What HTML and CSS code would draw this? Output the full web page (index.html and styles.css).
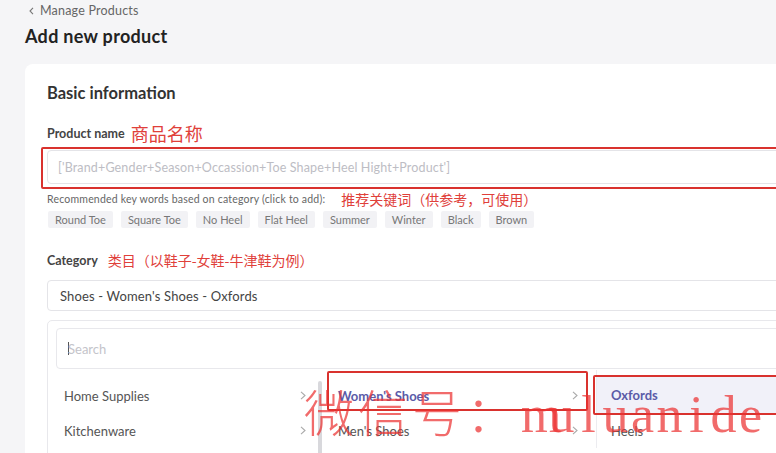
FILE: index.html
```html
<!DOCTYPE html>
<html>
<head>
<meta charset="utf-8">
<link rel="stylesheet" href="styles.css">
</head>
<body>
<div class="page">
  <div class="crumb"><svg class="crumb-icon" width="5" height="8" viewBox="0 0 5 8"><path d="M4 0.8 L1 4 L4 7.2" fill="none" stroke="#777" stroke-width="1.1"/></svg>Manage Products</div>
  <h1 class="title">Add new product</h1>
  <div class="card">
    <h2 class="section">Basic information</h2>
    <div class="label-row"><span class="label">Product name</span><span class="note big">商品名称</span></div>
    <div class="name-wrap">
      <div class="input name-input">['Brand+Gender+Season+Occassion+Toe Shape+Heel Hight+Product']</div>
    </div>
    <div class="hint-row"><span class="hint">Recommended key words based on category (click to add):</span><span class="note small">推荐关键词（供参考，可使用）</span></div>
    <div class="tags">
      <span class="tag">Round Toe</span><span class="tag">Square Toe</span><span class="tag">No Heel</span><span class="tag">Flat Heel</span><span class="tag">Summer</span><span class="tag">Winter</span><span class="tag">Black</span><span class="tag">Brown</span>
    </div>
    <div class="label-row cat-row"><span class="label">Category</span><span class="note small">类目（以鞋子-女鞋-牛津鞋为例）</span></div>
    <div class="input cat-input">Shoes - Women's Shoes - Oxfords</div>
    <div class="panel">
      <div class="search"><span class="caret"></span>Search</div>
      <div class="cols">
        <div class="col col1">
          <div class="item">Home Supplies<svg class="chev" width="6" height="9" viewBox="0 0 6 9"><path d="M1 0.8 L5 4.5 L1 8.2" fill="none" stroke="#aaa" stroke-width="1.1"/></svg></div>
          <div class="item">Kitchenware<svg class="chev" width="6" height="9" viewBox="0 0 6 9"><path d="M1 0.8 L5 4.5 L1 8.2" fill="none" stroke="#aaa" stroke-width="1.1"/></svg></div>
          <div class="scroll"></div>
        </div>
        <div class="col col2">
          <div class="item active">Women's Shoes<svg class="chev" width="6" height="9" viewBox="0 0 6 9"><path d="M1 0.8 L5 4.5 L1 8.2" fill="none" stroke="#aaa" stroke-width="1.1"/></svg></div>
          <div class="item">Men's Shoes<svg class="chev" width="6" height="9" viewBox="0 0 6 9"><path d="M1 0.8 L5 4.5 L1 8.2" fill="none" stroke="#aaa" stroke-width="1.1"/></svg></div>
        </div>
        <div class="col col3">
          <div class="item active selected">Oxfords</div>
          <div class="item">Heels</div>
        </div>
      </div>
    </div>
  </div>
</div>
<div class="mark mark-name"></div>
<div class="mark mark-women"></div>
<div class="mark mark-ox"></div>
<div class="watermark"><span class="wm-cjk">微信号：</span><span class="wm-latin"><span>m</span><span>u</span><span>l</span><span>u</span><span>a</span><span>n</span><span>i</span><span>d</span><span>e</span></span></div>
</body>
</html>
```
FILE: styles.css
```css
html, body {
  margin: 0;
  padding: 0;
  width: 776px;
  height: 453px;
  overflow: hidden;
  background: #f5f5f7;
  font-family: Lato, "Open Sans", "Noto Sans CJK SC", sans-serif;
  color: #333;
  position: relative;
}
.page {
  padding-left: 25px;
}
.crumb {
  display: flex;
  align-items: center;
  font-size: 12.5px;
  color: #666;
  padding: 3px 0 0 4px;
  height: 16px;
  line-height: 16px;
  letter-spacing: 0.2px;
}
.crumb-icon {
  margin-right: 6px;
}
.title {
  margin: 0;
  font-size: 18px;
  font-weight: 700;
  color: #222;
  line-height: 20px;
  padding-top: 7px;
  height: 38px;
  letter-spacing: 0.3px;
}
.card {
  background: #fff;
  border-radius: 8px;
  width: 820px;
  height: 420px;
  padding: 18px 0 0 22px;
  box-sizing: border-box;
}
.section {
  margin: 0;
  font-size: 16.5px;
  font-weight: 700;
  color: #333;
  line-height: 22px;
  height: 39px;
}
.label-row {
  display: flex;
  align-items: center;
  gap: 6px;
  height: 24px;
}
.label {
  font-size: 12.5px;
  font-weight: 700;
  color: #444;
}
.note {
  font-family: "Noto Sans CJK SC", sans-serif;
  color: #e0403a;
  line-height: 20px;
}
.note.big {
  font-size: 18px;
}
.note.small {
  font-size: 14px;
}
.cat-row .note {
  margin-left: 4px;
}
.name-wrap {
  margin-top: 3px;
  height: 38px;
  display: flex;
  align-items: center;
}
.input {
  border: 1px solid #e4e4e8;
  border-radius: 4px;
  box-sizing: border-box;
  display: flex;
  align-items: center;
}
.name-input {
  width: 100%;
  height: 34px;
  padding-left: 10px;
  font-size: 12.5px;
  color: #bdbdc4;
  letter-spacing: 0.15px;
  white-space: nowrap;
}
.hint-row {
  display: flex;
  align-items: center;
  gap: 16px;
  margin-top: 4px;
  height: 18px;
}
.hint {
  font-size: 10.5px;
  color: #666;
  letter-spacing: 0.2px;
}
.tags {
  display: flex;
  gap: 8px;
  margin-top: 2px;
  margin-left: 1px;
  height: 18px;
  align-items: center;
}
.tag {
  background: #f2f2f5;
  border-radius: 2px;
  font-size: 11px;
  color: #777;
  padding: 2px 7px;
  line-height: 13px;
}
.cat-row {
  margin-top: 20px;
}
.cat-input {
  margin-top: 8px;
  height: 31px;
  padding-left: 12px;
  font-size: 13px;
  color: #444;
  letter-spacing: 0.15px;
}
.panel {
  margin-top: 9px;
  border: 1px solid #e8e8ec;
  border-radius: 5px;
  padding: 7px 0 0 8px;
  height: 200px;
  box-sizing: border-box;
}
.search {
  height: 41px;
  border: 1px solid #e8e8ec;
  border-radius: 4px;
  box-sizing: border-box;
  display: flex;
  align-items: center;
  padding-left: 11px;
  font-size: 13px;
  color: #c4c4ca;
}
.caret {
  width: 1px;
  height: 13px;
  background: #555;
  margin-right: -1px;
}
.cols {
  display: flex;
  margin-left: -8px;
  margin-top: 1px;
}
.col {
  position: relative;
  padding-top: 8px;
}
.col1 {
  width: 274px;
}
.col2 {
  width: 274px;
}
.col3 {
  flex: 1;
  border-left: 1px solid #ececf0;
  padding-top: 6px;
}
.item {
  display: flex;
  align-items: center;
  justify-content: space-between;
  height: 35px;
  padding: 0 16px 0 16px;
  font-size: 13px;
  color: #555;
}
.col1 .item {
  padding-right: 16px;
}
.col2 .item {
  padding-left: 16px;
  padding-right: 18px;
}
.col3 .item {
  height: 38px;
  padding-left: 14px;
}
.col3 .item + .item {
  height: 33px;
}
.item.active {
  color: #5b5ba8;
  font-weight: 700;
}
.item.selected {
  background: #f1f1f9;
}
.chev {
  flex: none;
}
.scroll {
  position: absolute;
  right: 0;
  top: 11px;
  width: 4px;
  height: 120px;
  background: #d8d8dc;
  border-radius: 2px;
}
.mark {
  position: absolute;
  border: 2px solid #d9322e;
  border-radius: 2px;
  box-sizing: border-box;
}
.mark-name {
  left: 41px;
  top: 147px;
  width: 760px;
  height: 42px;
}
.mark-women {
  left: 327px;
  top: 371px;
  width: 261px;
  height: 40px;
}
.mark-ox {
  left: 593px;
  top: 375px;
  width: 200px;
  height: 40px;
}
.watermark {
  position: absolute;
  left: 304px;
  top: 380px;
  display: flex;
  align-items: baseline;
  color: rgba(236, 50, 50, 0.72);
  white-space: nowrap;
  line-height: 60px;
}
.wm-cjk {
  font-family: "Noto Sans CJK SC", sans-serif;
  font-weight: 200;
  font-size: 50px;
  letter-spacing: 4px;
}
.wm-latin {
  display: flex;
  margin-left: 1px;
  font-family: "Liberation Serif", serif;
  font-size: 52px;
}
.wm-latin span {
  width: 27px;
  text-align: center;
}
```
